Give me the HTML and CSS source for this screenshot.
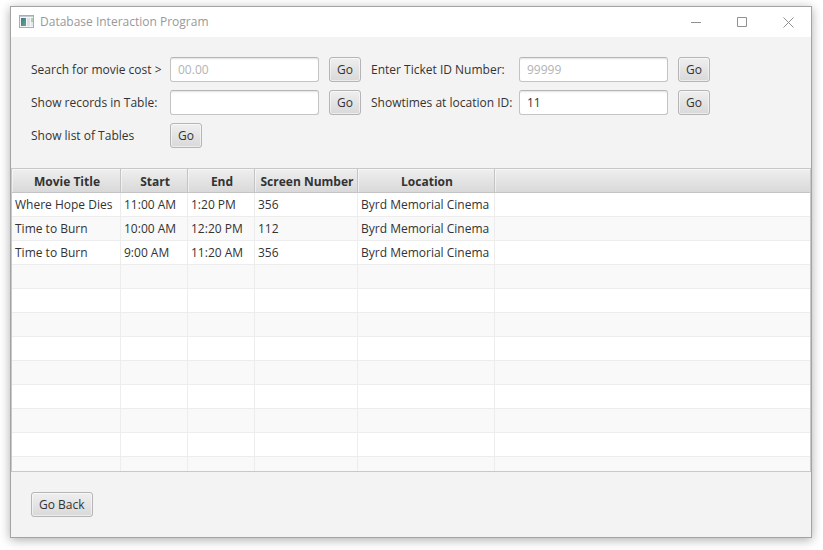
FILE: index.html
```html
<!DOCTYPE html>
<html lang="en">
<head>
<meta charset="utf-8">
<title>Database Interaction Program</title>
<link rel="stylesheet" href="styles.css">
</head>
<body>
<main class="window">
  <header class="titlebar">
    <svg class="app-icon" width="16" height="14" viewBox="0 0 16 14" aria-hidden="true">
      <defs>
        <linearGradient id="pane" x1="0" y1="0" x2="1" y2="1">
          <stop offset="0" stop-color="#3f7396"/>
          <stop offset="1" stop-color="#5fae7c"/>
        </linearGradient>
      </defs>
      <rect x="0.5" y="0.5" width="14" height="12" fill="#f4f5f7" stroke="#a9adb2"/>
      <path d="M1 1.5h13" stroke="#c6cbd0"/>
      <rect x="2" y="3" width="5" height="8" fill="url(#pane)"/>
      <rect x="8" y="3" width="3" height="8" fill="#e0e1e5"/>
      <rect x="12" y="3" width="2" height="4" fill="#a9cfba"/>
      <rect x="12" y="7" width="2" height="4" fill="#e6e7ea"/>
    </svg>
    <h1 class="title">Database Interaction Program</h1>
    <div class="controls">
      <button class="control" type="button" aria-label="Minimize"><svg width="11" height="11" viewBox="0 0 11 11"><path d="M0 5.5h10"/></svg></button>
      <button class="control" type="button" aria-label="Maximize"><svg width="11" height="11" viewBox="0 0 11 11"><path d="M.5.5h9v9h-9z"/></svg></button>
      <button class="control" type="button" aria-label="Close"><svg width="11" height="11" viewBox="0 0 11 11"><path d="M.5.5l10 10M10.5.5l-10 10"/></svg></button>
    </div>
  </header>

  <form class="queries">
    <label for="cost">Search for movie cost &gt;</label>
    <input class="field" id="cost" type="text" placeholder="00.00">
    <button class="btn" type="button">Go</button>
    <label for="ticket">Enter Ticket ID Number:</label>
    <input class="field" id="ticket" type="text" placeholder="99999">
    <button class="btn" type="button">Go</button>

    <label for="records">Show records in Table:</label>
    <input class="field" id="records" type="text">
    <button class="btn" type="button">Go</button>
    <label for="location">Showtimes at location ID:</label>
    <input class="field" id="location" type="text" value="11">
    <button class="btn" type="button">Go</button>

    <label for="list">Show list of Tables</label>
    <button class="btn" id="list" type="button">Go</button>
  </form>

  <section class="results">
    <table>
      <colgroup>
        <col class="col-title"><col class="col-time"><col class="col-time"><col class="col-screen"><col class="col-location"><col>
      </colgroup>
      <thead>
        <tr><th>Movie Title</th><th>Start</th><th>End</th><th>Screen Number</th><th>Location</th><th></th></tr>
      </thead>
      <tbody>
        <tr><td>Where Hope Dies</td><td>11:00 AM</td><td>1:20 PM</td><td>356</td><td>Byrd Memorial Cinema</td><td></td></tr>
        <tr><td>Time to Burn</td><td>10:00 AM</td><td>12:20 PM</td><td>112</td><td>Byrd Memorial Cinema</td><td></td></tr>
        <tr><td>Time to Burn</td><td>9:00 AM</td><td>11:20 AM</td><td>356</td><td>Byrd Memorial Cinema</td><td></td></tr>
        <tr><td></td><td></td><td></td><td></td><td></td><td></td></tr>
        <tr><td></td><td></td><td></td><td></td><td></td><td></td></tr>
        <tr><td></td><td></td><td></td><td></td><td></td><td></td></tr>
        <tr><td></td><td></td><td></td><td></td><td></td><td></td></tr>
        <tr><td></td><td></td><td></td><td></td><td></td><td></td></tr>
        <tr><td></td><td></td><td></td><td></td><td></td><td></td></tr>
        <tr><td></td><td></td><td></td><td></td><td></td><td></td></tr>
        <tr><td></td><td></td><td></td><td></td><td></td><td></td></tr>
        <tr><td></td><td></td><td></td><td></td><td></td><td></td></tr>
      </tbody>
    </table>
  </section>

  <footer class="footer">
    <button class="btn" type="button">Go Back</button>
  </footer>
</main>
</body>
</html>
```
FILE: styles.css
```css
* {
  box-sizing: border-box;
}

body {
  display: flex;
  height: 100vh;
  margin: 0;
  padding: 6px 11px 12px 10px;
  background: #fff;
  color: #333;
  font: 12px/16px "Segoe UI", "Open Sans", "Noto Sans", sans-serif;
}

button,
input {
  color: inherit;
  font: inherit;
}

.window {
  display: flex;
  flex: 1;
  flex-direction: column;
  min-width: 0;
  border: 1px solid #a3a3a3;
  background: #f3f3f3;
  box-shadow: 0 2px 10px rgba(0, 0, 0, 0.32);
}

.titlebar {
  display: flex;
  align-items: center;
  height: 30px;
  padding-left: 8px;
  background: #fff;
}

.title {
  margin: 0 auto 0 5px;
  color: #999;
  font-size: 12px;
  font-weight: 400;
}

.controls {
  display: flex;
}

.control {
  display: grid;
  place-items: center;
  width: 46px;
  height: 30px;
  padding: 0;
  border: 0;
  background: none;
}

.control svg {
  fill: none;
  stroke: #909090;
}

.queries {
  display: grid;
  grid-template-columns: 129px 149px 32px 138px 149px 32px;
  gap: 8px 10px;
  align-items: center;
  justify-items: start;
  padding: 20px;
  white-space: nowrap;
}

.field {
  width: 100%;
  height: 25px;
  padding: 0 7px;
  border: 1px solid #c4c4c4;
  border-top-color: #b5b5b5;
  border-radius: 3px;
  background: #fff;
  box-shadow: inset 0 2px 2px -1px #e2e2e2;
}

.field::placeholder {
  color: #b3b3b3;
  opacity: 1;
}

.btn {
  min-width: 32px;
  height: 25px;
  padding: 0 7px;
  border: 1px solid #b5b5b5;
  border-radius: 3px;
  background: linear-gradient(#efefef, #d9d9d9);
  box-shadow: inset 0 0 0 1px rgba(255, 255, 255, 0.5);
  white-space: nowrap;
}

.results {
  flex: 1 1 0;
  min-height: 0;
  overflow: hidden;
  border: 1px solid #c8c8c8;
  background: #fff;
}

table {
  width: 100%;
  border-spacing: 0;
  table-layout: fixed;
}

.col-title {
  width: 109px;
}

.col-time {
  width: 67px;
}

.col-screen {
  width: 103px;
}

.col-location {
  width: 137px;
}

th,
td {
  height: 24px;
  padding: 0 3px;
  border-right: 1px solid #ededed;
  border-bottom: 1px solid #ededed;
  text-align: left;
  white-space: nowrap;
}

th {
  padding: 2px 0 0 2px;
  border-color: #c4c4c4;
  background: linear-gradient(#efefef, #d9d9d9);
  box-shadow: inset 1px 1px 0 rgba(255, 255, 255, 0.5);
  text-align: center;
}

th:last-child,
td:last-child {
  border-right: 0;
}

tbody tr:nth-child(even) {
  background: #f9f9f9;
}

.footer {
  padding: 20px;
}
```
